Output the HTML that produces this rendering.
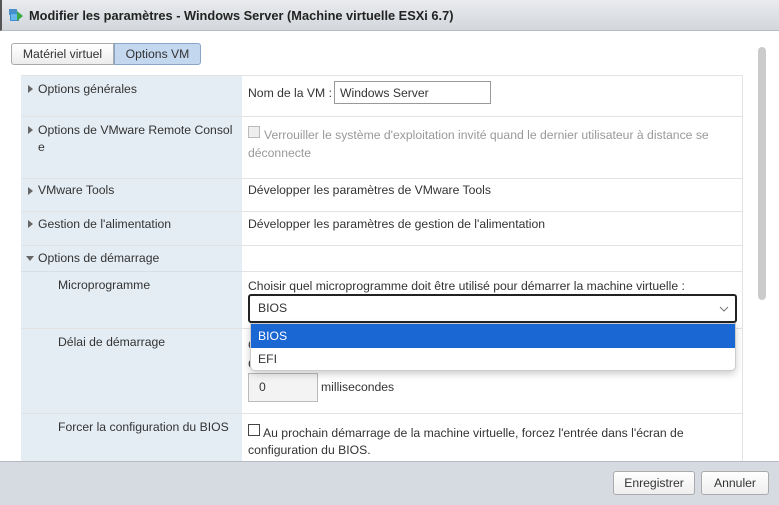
<!DOCTYPE html>
<html><head><meta charset="utf-8"><style>
*{box-sizing:border-box;margin:0;padding:0}
body{width:779px;height:505px;overflow:hidden;background:#fff;font-family:"Liberation Sans",sans-serif;font-size:12px;color:#333;position:relative}
.abs{position:absolute}
.title{left:0;top:0;width:779px;height:31px;background:linear-gradient(#e9ebee,#d3d7dc);border-bottom:1px solid #b8bcc2;border-left:2px solid #555}
.title span{position:absolute;left:27px;top:8px;font-weight:bold;font-size:12.8px;color:#222}
.foot{left:0;top:461px;width:779px;height:44px;background:#d6dbe1;border-top:1px solid #b8bcc2}
.btn{position:absolute;top:471px;height:24px;border:1px solid #aaa;border-radius:3px;background:linear-gradient(#fff,#eee);font-size:12.2px;text-align:center;line-height:22px;color:#333}
.lc{position:absolute;left:21px;width:221px;background:#e4edf4}
.hl{position:absolute;left:21px;width:722px;height:1px;background:#e3e3e3}
.t{position:absolute;font-size:12.2px;white-space:nowrap}
.tri{position:absolute;width:0;height:0;border-top:4px solid transparent;border-bottom:4px solid transparent;border-left:5px solid #666}
.trid{position:absolute;width:0;height:0;border-left:4px solid transparent;border-right:4px solid transparent;border-top:5px solid #666}
</style></head><body>
<div class="abs title"><svg class="abs" style="left:6px;top:7px" width="16" height="16" viewBox="0 0 16 16"><rect x="1" y="2" width="8" height="6" fill="#4a90c8"/><rect x="2" y="6" width="9" height="8" fill="#3c8fd0"/><rect x="3" y="7" width="7" height="6" fill="#6bb6e8"/><path d="M9 4 L15 9 L9 14Z" fill="#3aa845"/></svg><span>Modifier les paramètres - Windows Server (Machine virtuelle ESXi 6.7)</span></div>

<div class="abs" style="left:11px;top:43px;width:103px;height:22px;border:1px solid #aaa;border-radius:3px 0 0 3px;background:linear-gradient(#fff,#ececec);font-size:12.2px;text-align:center;line-height:20px">Matériel virtuel</div>
<div class="abs" style="left:114px;top:43px;width:87px;height:22px;border:1px solid #8aa4c8;border-radius:0 3px 3px 0;background:#c3d7ef;font-size:12.2px;text-align:center;line-height:20px">Options VM</div>

<div class="abs" style="left:21px;top:75px;width:722px;height:386px;border-right:1px solid #e3e3e3"></div>
<div class="lc" style="top:75px;height:386px"></div>
<div class="hl" style="top:75px"></div>
<div class="hl" style="top:116px"></div>
<div class="hl" style="top:178px"></div>
<div class="hl" style="top:211px"></div>
<div class="hl" style="top:245px"></div>
<div class="hl" style="top:271px;left:242px;width:501px"></div>
<div class="hl" style="top:271px;width:221px;background:#d6e0ea"></div>
<div class="hl" style="top:328px"></div>
<div class="hl" style="top:413px"></div>

<div class="tri" style="left:28px;top:85px"></div><div class="t" style="left:38px;top:82px">Options générales</div>
<div class="tri" style="left:28px;top:126px"></div><div class="t" style="left:38px;top:123px">Options de VMware Remote Consol</div><div class="t" style="left:38px;top:140px">e</div>
<div class="tri" style="left:28px;top:187px"></div><div class="t" style="left:38px;top:183px">VMware Tools</div>
<div class="tri" style="left:28px;top:220px"></div><div class="t" style="left:38px;top:217px">Gestion de l'alimentation</div>
<div class="trid" style="left:26px;top:256px"></div><div class="t" style="left:38px;top:251px">Options de démarrage</div>
<div class="t" style="left:58px;top:278px">Microprogramme</div>
<div class="t" style="left:58px;top:335px">Délai de démarrage</div>
<div class="t" style="left:58px;top:420px">Forcer la configuration du BIOS</div>

<div class="t" style="left:248px;top:86px">Nom de la VM :</div>
<div class="abs" style="left:334px;top:81px;width:157px;height:23px;border:1px solid #999;padding-left:5px;line-height:22px;font-size:12.2px">Windows Server</div>
<div class="abs" style="left:248px;top:126px;width:12px;height:12px;border:1px solid #bbb;background:#eee"></div>
<div class="t" style="left:264px;top:128px;color:#999">Verrouiller le système d'exploitation invité quand le dernier utilisateur à distance se</div>
<div class="t" style="left:248px;top:146px;color:#999">déconnecte</div>
<div class="t" style="left:248px;top:183px">Développer les paramètres de VMware Tools</div>
<div class="t" style="left:248px;top:217px">Développer les paramètres de gestion de l'alimentation</div>
<div class="t" style="left:248px;top:279px">Choisir quel microprogramme doit être utilisé pour démarrer la machine virtuelle :</div>
<div class="abs" style="left:248px;top:294px;width:489px;height:29px;border:2px solid #222;border-radius:3px;padding-left:8px;line-height:25px;font-size:12.2px">BIOS<svg class="abs" style="right:6px;top:10px" width="10" height="6"><path d="M1 1 L5 5 L9 1" stroke="#777" fill="none"/></svg></div>
<div class="t" style="left:248px;top:338px">C</div><div class="t" style="left:248px;top:357px">C</div>
<div class="abs" style="left:248px;top:373px;width:70px;height:29px;border:1px solid #bbb;background:#f3f3f3;padding-left:10px;line-height:27px;font-size:12.2px">0</div>
<div class="t" style="left:321px;top:380px">millisecondes</div>
<div class="abs" style="left:248px;top:424px;width:12px;height:12px;border:1px solid #444;background:#fff"></div>
<div class="t" style="left:263px;top:426px">Au prochain démarrage de la machine virtuelle, forcez l'entrée dans l'écran de</div>
<div class="t" style="left:248px;top:443px">configuration du BIOS.</div>

<div class="abs" style="left:250px;top:323px;width:486px;height:48px;background:#fff;border:1px solid #ccc;border-radius:0 0 5px 5px;box-shadow:0 3px 8px rgba(0,0,0,.2);overflow:hidden">
<div style="height:24px;background:#1a66d2;color:#fff;padding-left:7px;line-height:24px;font-size:12.2px">BIOS</div>
<div style="height:24px;padding-left:7px;line-height:23px;font-size:12.2px">EFI</div></div>

<div class="abs" style="left:758px;top:47px;width:8px;height:253px;background:#cbcbcb;border-radius:4px"></div>

<div class="abs foot"></div>
<div class="btn" style="left:613px;width:82px">Enregistrer</div>
<div class="btn" style="left:701px;width:68px">Annuler</div>
</body></html>
